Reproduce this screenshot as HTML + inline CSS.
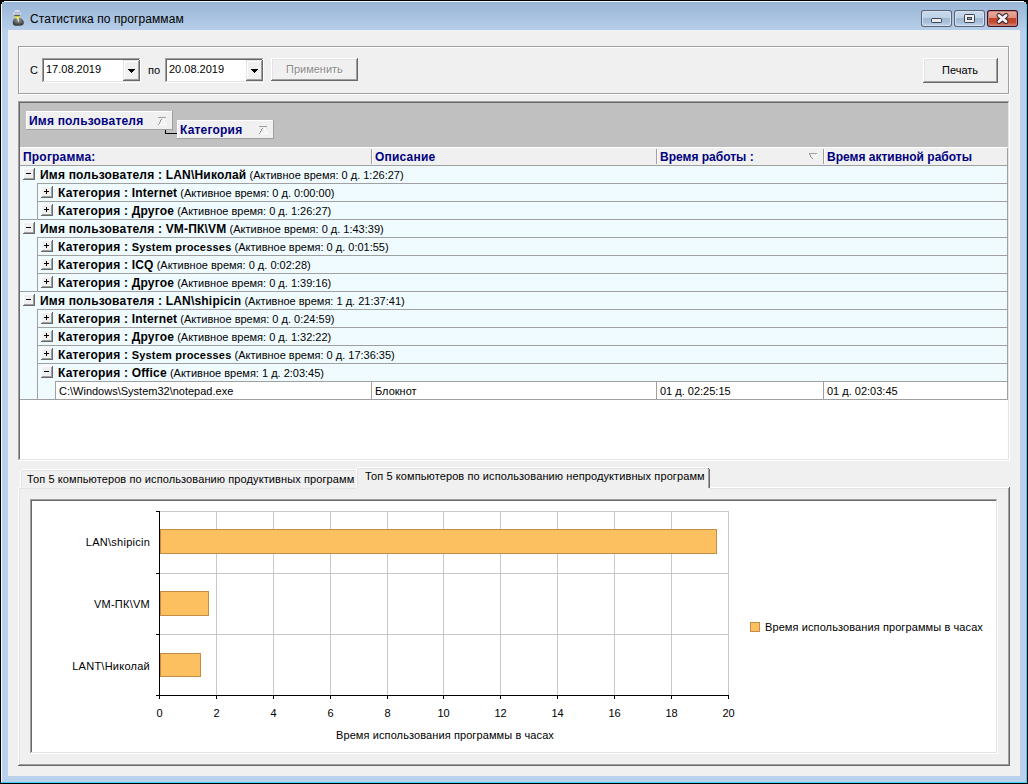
<!DOCTYPE html>
<html><head><meta charset="utf-8">
<style>
*{box-sizing:border-box;margin:0;padding:0}
html,body{width:1028px;height:784px;overflow:hidden;background:#000}
body{position:relative;font-family:"Liberation Sans",sans-serif;font-size:11px;color:#000}
.a{position:absolute}
.t{position:absolute;white-space:nowrap;line-height:13px}
.b{font-weight:bold;font-size:12px;letter-spacing:0.2px}
.nav{color:#000080}
</style></head><body>
<div class="a" style="left:0px;top:0px;width:1028px;height:784px;background:#000"></div>
<div class="a" style="left:1px;top:1px;width:1026px;height:782px;background:#3ad4f0;border-radius:3px 3px 0 0"></div>
<div class="a" style="left:1px;top:1px;width:1025px;height:781px;background:#f4f8fc;border-radius:3px 3px 0 0"></div>
<div class="a" style="left:2px;top:2px;width:1024px;height:780px;background:#b9d1ea;border-radius:2px 2px 0 0"></div>
<div class="a" style="left:2px;top:2px;width:1024px;height:28px;background:linear-gradient(#99b5d6,#b6cee9);border-radius:2px 2px 0 0"></div>
<div class="a" style="left:1026px;top:1px;width:1px;height:3px;background:#000"></div>
<div class="a" style="left:1px;top:1px;width:3px;height:1px;background:#000"></div>
<div class="a" style="left:1px;top:1px;width:1px;height:3px;background:#000"></div>
<div class="a" style="left:1024px;top:1px;width:3px;height:1px;background:#000"></div>
<div class="a" style="left:8px;top:30px;width:1012px;height:746px;background:#f0f0f0"></div>
<div class="t" style="left:30px;top:12px;font-size:12px;line-height:15px;letter-spacing:0.08px">Статистика по программам</div>
<svg class="a" style="left:11px;top:9px" width="14" height="18" viewBox="11 9 14 18">
<defs><radialGradient id="bd" cx="0.5" cy="0.3" r="0.75"><stop offset="0" stop-color="#9a9a9a"/><stop offset="0.6" stop-color="#555"/><stop offset="1" stop-color="#2a2a2a"/></radialGradient></defs>
<path d="M13 24 C12 21 13.5 18 17.5 17.8 C21.5 17.8 24 20 23.8 23 C23.5 25.5 21 25.8 18 25.8 C15 25.8 13.5 25.5 13 24 Z" fill="url(#bd)"/>
<path d="M17 18 L18.8 18 L18.6 23 Z" fill="#f4f4f4"/>
<ellipse cx="17.2" cy="16.8" rx="2.5" ry="2" fill="#f4e640"/>
<rect x="14.3" y="14.6" width="5.6" height="1.6" rx="0.6" fill="#56604c"/>
<rect x="14.6" y="10" width="5.2" height="3" rx="1.3" fill="#dadce6"/>
<ellipse cx="17" cy="13.4" rx="4.1" ry="1" fill="#eceef4"/>
<rect x="14.4" y="12.4" width="5.6" height="1" fill="#8c90d0"/>
</svg>
<div class="a" style="left:921px;top:10px;width:31px;height:17px;background:#56647a;border-radius:3px"></div>
<div class="a" style="left:922px;top:11px;width:29px;height:15px;background:rgba(240,246,252,0.85);border-radius:2px"></div>
<div class="a" style="left:923px;top:12px;width:27px;height:13px;background:linear-gradient(#c6d8ec 0%,#bed2e8 45%,#9fb8d4 50%,#a8c0dc 80%,#bcd2ea 100%)"></div>
<div class="a" style="left:954px;top:10px;width:31px;height:17px;background:#56647a;border-radius:3px"></div>
<div class="a" style="left:955px;top:11px;width:29px;height:15px;background:rgba(240,246,252,0.85);border-radius:2px"></div>
<div class="a" style="left:956px;top:12px;width:27px;height:13px;background:linear-gradient(#c6d8ec 0%,#bed2e8 45%,#9fb8d4 50%,#a8c0dc 80%,#bcd2ea 100%)"></div>
<div class="a" style="left:987px;top:10px;width:31px;height:17px;background:#4a0a14;border-radius:3px"></div>
<div class="a" style="left:988px;top:11px;width:29px;height:15px;background:rgba(255,220,210,0.6);border-radius:2px"></div>
<div class="a" style="left:989px;top:12px;width:27px;height:13px;background:linear-gradient(#eaaa9c 0%,#dc9080 45%,#c0442a 50%,#c44a30 80%,#d87a64 100%)"></div>
<div class="a" style="left:931px;top:18px;width:11px;height:5px;background:#3c4250;border-radius:2px"></div>
<div class="a" style="left:932px;top:19px;width:9px;height:3px;background:#ebebeb"></div>
<div class="a" style="left:964px;top:14px;width:11px;height:9px;background:#3c4250;border-radius:2px"></div>
<div class="a" style="left:965px;top:15px;width:9px;height:7px;background:#f0f0f0"></div>
<div class="a" style="left:967px;top:17px;width:5px;height:3px;background:#3c4250"></div>
<div class="a" style="left:968px;top:18px;width:3px;height:1px;background:#98acc4"></div>
<svg class="a" style="left:994px;top:11px" width="17" height="15" viewBox="0 0 17 15">
<path d="M5 4.5 L12 10.5 M12 4.5 L5 10.5" stroke="#44303a" stroke-width="5" stroke-linecap="round"/>
<path d="M5 4.5 L12 10.5 M12 4.5 L5 10.5" stroke="#f6f6f6" stroke-width="2.8" stroke-linecap="round"/>
</svg>
<div class="a" style="left:19px;top:47px;width:991px;height:48px;border:1px solid #fff"></div>
<div class="a" style="left:18px;top:46px;width:991px;height:48px;border:1px solid #a0a0a0"></div>
<div class="t" style="left:30px;top:64px;">С</div>
<div class="a" style="left:42px;top:58px;width:99px;height:25px;background:#fff"></div>
<div class="a" style="left:42px;top:58px;width:98px;height:24px;background:#a0a0a0"></div>
<div class="a" style="left:43px;top:59px;width:97px;height:23px;background:#e3e3e3"></div>
<div class="a" style="left:43px;top:59px;width:96px;height:22px;background:#696969"></div>
<div class="a" style="left:44px;top:60px;width:95px;height:21px;background:#fff"></div>
<div class="t" style="left:46px;top:63px;">17.08.2019</div>
<div class="a" style="left:123px;top:60px;width:17px;height:21px;background:#696969"></div>
<div class="a" style="left:123px;top:60px;width:16px;height:20px;background:#e3e3e3"></div>
<div class="a" style="left:124px;top:61px;width:15px;height:19px;background:#a0a0a0"></div>
<div class="a" style="left:124px;top:61px;width:14px;height:18px;background:#fff"></div>
<div class="a" style="left:125px;top:62px;width:13px;height:17px;background:#f0f0f0"></div>
<div class="a" style="left:128px;top:69px;width:7px;height:1px;background:#000"></div>
<div class="a" style="left:129px;top:70px;width:5px;height:1px;background:#000"></div>
<div class="a" style="left:130px;top:71px;width:3px;height:1px;background:#000"></div>
<div class="a" style="left:131px;top:72px;width:1px;height:1px;background:#000"></div>
<div class="t" style="left:148px;top:64px;">по</div>
<div class="a" style="left:165px;top:58px;width:99px;height:25px;background:#fff"></div>
<div class="a" style="left:165px;top:58px;width:98px;height:24px;background:#a0a0a0"></div>
<div class="a" style="left:166px;top:59px;width:97px;height:23px;background:#e3e3e3"></div>
<div class="a" style="left:166px;top:59px;width:96px;height:22px;background:#696969"></div>
<div class="a" style="left:167px;top:60px;width:95px;height:21px;background:#fff"></div>
<div class="t" style="left:169px;top:63px;">20.08.2019</div>
<div class="a" style="left:246px;top:60px;width:17px;height:21px;background:#696969"></div>
<div class="a" style="left:246px;top:60px;width:16px;height:20px;background:#e3e3e3"></div>
<div class="a" style="left:247px;top:61px;width:15px;height:19px;background:#a0a0a0"></div>
<div class="a" style="left:247px;top:61px;width:14px;height:18px;background:#fff"></div>
<div class="a" style="left:248px;top:62px;width:13px;height:17px;background:#f0f0f0"></div>
<div class="a" style="left:251px;top:69px;width:7px;height:1px;background:#000"></div>
<div class="a" style="left:252px;top:70px;width:5px;height:1px;background:#000"></div>
<div class="a" style="left:253px;top:71px;width:3px;height:1px;background:#000"></div>
<div class="a" style="left:254px;top:72px;width:1px;height:1px;background:#000"></div>
<div class="a" style="left:271px;top:58px;width:87px;height:23px;background:#696969"></div>
<div class="a" style="left:271px;top:58px;width:86px;height:22px;background:#fff"></div>
<div class="a" style="left:272px;top:59px;width:85px;height:21px;background:#a0a0a0"></div>
<div class="a" style="left:272px;top:59px;width:84px;height:20px;background:#e3e3e3"></div>
<div class="a" style="left:273px;top:60px;width:83px;height:19px;background:#f0f0f0"></div>
<div class="t" style="left:286px;top:63px;color:#8a8a8a;text-shadow:1px 1px 0 #fff">Применить</div>
<div class="a" style="left:923px;top:58px;width:75px;height:25px;background:#696969"></div>
<div class="a" style="left:923px;top:58px;width:74px;height:24px;background:#fff"></div>
<div class="a" style="left:924px;top:59px;width:73px;height:23px;background:#a0a0a0"></div>
<div class="a" style="left:924px;top:59px;width:72px;height:22px;background:#e3e3e3"></div>
<div class="a" style="left:925px;top:60px;width:71px;height:21px;background:#f0f0f0"></div>
<div class="t" style="left:942px;top:64px;">Печать</div>
<div class="a" style="left:18px;top:101px;width:992px;height:360px;background:#fff"></div>
<div class="a" style="left:18px;top:101px;width:991px;height:359px;background:#a0a0a0"></div>
<div class="a" style="left:19px;top:102px;width:990px;height:358px;background:#e3e3e3"></div>
<div class="a" style="left:19px;top:102px;width:989px;height:357px;background:#696969"></div>
<div class="a" style="left:20px;top:103px;width:988px;height:356px;background:#fff"></div>
<div class="a" style="left:20px;top:103px;width:988px;height:44px;background:#c0c0c0"></div>
<div class="a" style="left:26px;top:111px;width:147px;height:19px;background:#a0a0a0"></div>
<div class="a" style="left:26px;top:111px;width:146px;height:18px;background:#fff"></div>
<div class="a" style="left:27px;top:112px;width:145px;height:17px;background:#f0f0f0"></div>
<div class="t b nav" style="left:29px;top:115px;">Имя пользователя</div>
<div class="a" style="left:158px;top:117px;width:8px;height:1px;background:#a0a0a0"></div>
<div class="a" style="left:161px;top:119px;width:1px;height:1px;background:#909090"></div>
<div class="a" style="left:160px;top:120px;width:1px;height:1px;background:#909090"></div>
<div class="a" style="left:160px;top:121px;width:1px;height:1px;background:#909090"></div>
<div class="a" style="left:159px;top:122px;width:1px;height:1px;background:#909090"></div>
<div class="a" style="left:158px;top:124px;width:1px;height:1px;background:#909090"></div>
<div class="a" style="left:159px;top:123px;width:1px;height:1px;background:#b0b0b0"></div>
<div class="a" style="left:163px;top:119px;width:1px;height:1px;background:#fff"></div>
<div class="a" style="left:163px;top:120px;width:1px;height:1px;background:#fff"></div>
<div class="a" style="left:164px;top:121px;width:1px;height:1px;background:#fff"></div>
<div class="a" style="left:164px;top:122px;width:1px;height:1px;background:#fff"></div>
<div class="a" style="left:165px;top:123px;width:1px;height:1px;background:#fff"></div>
<div class="a" style="left:159px;top:124px;width:8px;height:1px;background:#fff"></div>
<div class="a" style="left:165px;top:130px;width:1px;height:4px;background:#000"></div>
<div class="a" style="left:165px;top:133px;width:12px;height:1px;background:#000"></div>
<div class="a" style="left:177px;top:120px;width:97px;height:19px;background:#a0a0a0"></div>
<div class="a" style="left:177px;top:120px;width:96px;height:18px;background:#fff"></div>
<div class="a" style="left:178px;top:121px;width:95px;height:17px;background:#f0f0f0"></div>
<div class="t b nav" style="left:180px;top:124px;">Категория</div>
<div class="a" style="left:259px;top:126px;width:8px;height:1px;background:#a0a0a0"></div>
<div class="a" style="left:262px;top:128px;width:1px;height:1px;background:#909090"></div>
<div class="a" style="left:261px;top:129px;width:1px;height:1px;background:#909090"></div>
<div class="a" style="left:261px;top:130px;width:1px;height:1px;background:#909090"></div>
<div class="a" style="left:260px;top:131px;width:1px;height:1px;background:#909090"></div>
<div class="a" style="left:259px;top:133px;width:1px;height:1px;background:#909090"></div>
<div class="a" style="left:260px;top:132px;width:1px;height:1px;background:#b0b0b0"></div>
<div class="a" style="left:264px;top:128px;width:1px;height:1px;background:#fff"></div>
<div class="a" style="left:264px;top:129px;width:1px;height:1px;background:#fff"></div>
<div class="a" style="left:265px;top:130px;width:1px;height:1px;background:#fff"></div>
<div class="a" style="left:265px;top:131px;width:1px;height:1px;background:#fff"></div>
<div class="a" style="left:266px;top:132px;width:1px;height:1px;background:#fff"></div>
<div class="a" style="left:260px;top:133px;width:8px;height:1px;background:#fff"></div>
<div class="a" style="left:20px;top:147px;width:988px;height:19px;background:#f0f0f0;border-top:1px solid #fff;border-bottom:1px solid #a0a0a0"></div>
<div class="a" style="left:371px;top:149px;width:1px;height:15px;background:#a0a0a0"></div>
<div class="a" style="left:372px;top:149px;width:1px;height:15px;background:#fff"></div>
<div class="a" style="left:656px;top:149px;width:1px;height:15px;background:#a0a0a0"></div>
<div class="a" style="left:657px;top:149px;width:1px;height:15px;background:#fff"></div>
<div class="a" style="left:823px;top:149px;width:1px;height:15px;background:#a0a0a0"></div>
<div class="a" style="left:824px;top:149px;width:1px;height:15px;background:#fff"></div>
<div class="t b nav" style="left:23px;top:151px;">Программа:</div>
<div class="t b nav" style="left:375px;top:151px;">Описание</div>
<div class="t b nav" style="left:660px;top:151px;letter-spacing:0">Время работы :</div>
<div class="a" style="left:809px;top:153px;width:8px;height:1px;background:#a0a0a0"></div>
<div class="a" style="left:809px;top:154px;width:1px;height:1px;background:#909090"></div>
<div class="a" style="left:810px;top:155px;width:1px;height:1px;background:#909090"></div>
<div class="a" style="left:810px;top:156px;width:1px;height:1px;background:#909090"></div>
<div class="a" style="left:811px;top:157px;width:1px;height:1px;background:#909090"></div>
<div class="a" style="left:812px;top:158px;width:1px;height:1px;background:#909090"></div>
<div class="a" style="left:816px;top:154px;width:1px;height:1px;background:#fff"></div>
<div class="a" style="left:815px;top:155px;width:1px;height:1px;background:#fff"></div>
<div class="a" style="left:815px;top:156px;width:1px;height:1px;background:#fff"></div>
<div class="a" style="left:814px;top:157px;width:1px;height:1px;background:#fff"></div>
<div class="a" style="left:813px;top:158px;width:1px;height:1px;background:#fff"></div>
<div class="t b nav" style="left:827px;top:151px;letter-spacing:0">Время активной работы</div>
<div class="a" style="left:1007px;top:148px;width:1px;height:18px;background:#a0a0a0"></div>
<div class="a" style="left:20px;top:166px;width:988px;height:216px;background:#f0fbff"></div>
<div class="a" style="left:20px;top:382px;width:35px;height:18px;background:#f0fbff"></div>
<div class="a" style="left:23px;top:168px;width:12px;height:12px;background:#696969"></div>
<div class="a" style="left:23px;top:168px;width:11px;height:11px;background:#fff"></div>
<div class="a" style="left:24px;top:169px;width:10px;height:10px;background:#a0a0a0"></div>
<div class="a" style="left:24px;top:169px;width:9px;height:9px;background:#f0f0f0"></div>
<div class="a" style="left:26px;top:173px;width:5px;height:1px;background:#000"></div>
<div class="t" style="left:40px;top:169px"><span class="b">Имя пользователя : LAN\Николай</span> (Активное время: 0 д. 1:26:27)</div>
<div class="a" style="left:37px;top:183px;width:971px;height:1px;background:#a0a0a0"></div>
<div class="a" style="left:37px;top:183px;width:1px;height:19px;background:#a0a0a0"></div>
<div class="a" style="left:41px;top:186px;width:12px;height:12px;background:#696969"></div>
<div class="a" style="left:41px;top:186px;width:11px;height:11px;background:#fff"></div>
<div class="a" style="left:42px;top:187px;width:10px;height:10px;background:#a0a0a0"></div>
<div class="a" style="left:42px;top:187px;width:9px;height:9px;background:#f0f0f0"></div>
<div class="a" style="left:44px;top:191px;width:5px;height:1px;background:#000"></div>
<div class="a" style="left:46px;top:189px;width:1px;height:5px;background:#000"></div>
<div class="t" style="left:58px;top:187px"><span class="b">Категория : Internet</span> (Активное время: 0 д. 0:00:00)</div>
<div class="a" style="left:37px;top:201px;width:971px;height:1px;background:#a0a0a0"></div>
<div class="a" style="left:37px;top:201px;width:1px;height:19px;background:#a0a0a0"></div>
<div class="a" style="left:41px;top:204px;width:12px;height:12px;background:#696969"></div>
<div class="a" style="left:41px;top:204px;width:11px;height:11px;background:#fff"></div>
<div class="a" style="left:42px;top:205px;width:10px;height:10px;background:#a0a0a0"></div>
<div class="a" style="left:42px;top:205px;width:9px;height:9px;background:#f0f0f0"></div>
<div class="a" style="left:44px;top:209px;width:5px;height:1px;background:#000"></div>
<div class="a" style="left:46px;top:207px;width:1px;height:5px;background:#000"></div>
<div class="t" style="left:58px;top:205px"><span class="b">Категория : Другое</span> (Активное время: 0 д. 1:26:27)</div>
<div class="a" style="left:20px;top:219px;width:988px;height:1px;background:#a0a0a0"></div>
<div class="a" style="left:23px;top:222px;width:12px;height:12px;background:#696969"></div>
<div class="a" style="left:23px;top:222px;width:11px;height:11px;background:#fff"></div>
<div class="a" style="left:24px;top:223px;width:10px;height:10px;background:#a0a0a0"></div>
<div class="a" style="left:24px;top:223px;width:9px;height:9px;background:#f0f0f0"></div>
<div class="a" style="left:26px;top:227px;width:5px;height:1px;background:#000"></div>
<div class="t" style="left:40px;top:223px"><span class="b">Имя пользователя : VM-ПК\VM</span> (Активное время: 0 д. 1:43:39)</div>
<div class="a" style="left:37px;top:237px;width:971px;height:1px;background:#a0a0a0"></div>
<div class="a" style="left:37px;top:237px;width:1px;height:19px;background:#a0a0a0"></div>
<div class="a" style="left:41px;top:240px;width:12px;height:12px;background:#696969"></div>
<div class="a" style="left:41px;top:240px;width:11px;height:11px;background:#fff"></div>
<div class="a" style="left:42px;top:241px;width:10px;height:10px;background:#a0a0a0"></div>
<div class="a" style="left:42px;top:241px;width:9px;height:9px;background:#f0f0f0"></div>
<div class="a" style="left:44px;top:245px;width:5px;height:1px;background:#000"></div>
<div class="a" style="left:46px;top:243px;width:1px;height:5px;background:#000"></div>
<div class="t" style="left:58px;top:241px"><span class="b">Категория : <span style="font-size:11px">System processes</span></span> (Активное время: 0 д. 0:01:55)</div>
<div class="a" style="left:37px;top:255px;width:971px;height:1px;background:#a0a0a0"></div>
<div class="a" style="left:37px;top:255px;width:1px;height:19px;background:#a0a0a0"></div>
<div class="a" style="left:41px;top:258px;width:12px;height:12px;background:#696969"></div>
<div class="a" style="left:41px;top:258px;width:11px;height:11px;background:#fff"></div>
<div class="a" style="left:42px;top:259px;width:10px;height:10px;background:#a0a0a0"></div>
<div class="a" style="left:42px;top:259px;width:9px;height:9px;background:#f0f0f0"></div>
<div class="a" style="left:44px;top:263px;width:5px;height:1px;background:#000"></div>
<div class="a" style="left:46px;top:261px;width:1px;height:5px;background:#000"></div>
<div class="t" style="left:58px;top:259px"><span class="b">Категория : ICQ</span> (Активное время: 0 д. 0:02:28)</div>
<div class="a" style="left:37px;top:273px;width:971px;height:1px;background:#a0a0a0"></div>
<div class="a" style="left:37px;top:273px;width:1px;height:19px;background:#a0a0a0"></div>
<div class="a" style="left:41px;top:276px;width:12px;height:12px;background:#696969"></div>
<div class="a" style="left:41px;top:276px;width:11px;height:11px;background:#fff"></div>
<div class="a" style="left:42px;top:277px;width:10px;height:10px;background:#a0a0a0"></div>
<div class="a" style="left:42px;top:277px;width:9px;height:9px;background:#f0f0f0"></div>
<div class="a" style="left:44px;top:281px;width:5px;height:1px;background:#000"></div>
<div class="a" style="left:46px;top:279px;width:1px;height:5px;background:#000"></div>
<div class="t" style="left:58px;top:277px"><span class="b">Категория : Другое</span> (Активное время: 0 д. 1:39:16)</div>
<div class="a" style="left:20px;top:291px;width:988px;height:1px;background:#a0a0a0"></div>
<div class="a" style="left:23px;top:294px;width:12px;height:12px;background:#696969"></div>
<div class="a" style="left:23px;top:294px;width:11px;height:11px;background:#fff"></div>
<div class="a" style="left:24px;top:295px;width:10px;height:10px;background:#a0a0a0"></div>
<div class="a" style="left:24px;top:295px;width:9px;height:9px;background:#f0f0f0"></div>
<div class="a" style="left:26px;top:299px;width:5px;height:1px;background:#000"></div>
<div class="t" style="left:40px;top:295px"><span class="b">Имя пользователя : LAN\shipicin</span> (Активное время: 1 д. 21:37:41)</div>
<div class="a" style="left:37px;top:309px;width:971px;height:1px;background:#a0a0a0"></div>
<div class="a" style="left:37px;top:309px;width:1px;height:19px;background:#a0a0a0"></div>
<div class="a" style="left:41px;top:312px;width:12px;height:12px;background:#696969"></div>
<div class="a" style="left:41px;top:312px;width:11px;height:11px;background:#fff"></div>
<div class="a" style="left:42px;top:313px;width:10px;height:10px;background:#a0a0a0"></div>
<div class="a" style="left:42px;top:313px;width:9px;height:9px;background:#f0f0f0"></div>
<div class="a" style="left:44px;top:317px;width:5px;height:1px;background:#000"></div>
<div class="a" style="left:46px;top:315px;width:1px;height:5px;background:#000"></div>
<div class="t" style="left:58px;top:313px"><span class="b">Категория : Internet</span> (Активное время: 0 д. 0:24:59)</div>
<div class="a" style="left:37px;top:327px;width:971px;height:1px;background:#a0a0a0"></div>
<div class="a" style="left:37px;top:327px;width:1px;height:19px;background:#a0a0a0"></div>
<div class="a" style="left:41px;top:330px;width:12px;height:12px;background:#696969"></div>
<div class="a" style="left:41px;top:330px;width:11px;height:11px;background:#fff"></div>
<div class="a" style="left:42px;top:331px;width:10px;height:10px;background:#a0a0a0"></div>
<div class="a" style="left:42px;top:331px;width:9px;height:9px;background:#f0f0f0"></div>
<div class="a" style="left:44px;top:335px;width:5px;height:1px;background:#000"></div>
<div class="a" style="left:46px;top:333px;width:1px;height:5px;background:#000"></div>
<div class="t" style="left:58px;top:331px"><span class="b">Категория : Другое</span> (Активное время: 0 д. 1:32:22)</div>
<div class="a" style="left:37px;top:345px;width:971px;height:1px;background:#a0a0a0"></div>
<div class="a" style="left:37px;top:345px;width:1px;height:19px;background:#a0a0a0"></div>
<div class="a" style="left:41px;top:348px;width:12px;height:12px;background:#696969"></div>
<div class="a" style="left:41px;top:348px;width:11px;height:11px;background:#fff"></div>
<div class="a" style="left:42px;top:349px;width:10px;height:10px;background:#a0a0a0"></div>
<div class="a" style="left:42px;top:349px;width:9px;height:9px;background:#f0f0f0"></div>
<div class="a" style="left:44px;top:353px;width:5px;height:1px;background:#000"></div>
<div class="a" style="left:46px;top:351px;width:1px;height:5px;background:#000"></div>
<div class="t" style="left:58px;top:349px"><span class="b">Категория : <span style="font-size:11px">System processes</span></span> (Активное время: 0 д. 17:36:35)</div>
<div class="a" style="left:37px;top:363px;width:971px;height:1px;background:#a0a0a0"></div>
<div class="a" style="left:37px;top:363px;width:1px;height:19px;background:#a0a0a0"></div>
<div class="a" style="left:41px;top:366px;width:12px;height:12px;background:#696969"></div>
<div class="a" style="left:41px;top:366px;width:11px;height:11px;background:#fff"></div>
<div class="a" style="left:42px;top:367px;width:10px;height:10px;background:#a0a0a0"></div>
<div class="a" style="left:42px;top:367px;width:9px;height:9px;background:#f0f0f0"></div>
<div class="a" style="left:44px;top:371px;width:5px;height:1px;background:#000"></div>
<div class="t" style="left:58px;top:367px"><span class="b">Категория : Office</span> (Активное время: 1 д. 2:03:45)</div>
<div class="a" style="left:55px;top:382px;width:953px;height:18px;background:#fff"></div>
<div class="a" style="left:55px;top:381px;width:1px;height:19px;background:#a0a0a0"></div>
<div class="a" style="left:55px;top:381px;width:953px;height:1px;background:#a0a0a0"></div>
<div class="a" style="left:20px;top:399px;width:988px;height:1px;background:#a0a0a0"></div>
<div class="a" style="left:37px;top:381px;width:1px;height:19px;background:#a0a0a0"></div>
<div class="a" style="left:371px;top:382px;width:1px;height:17px;background:#a0a0a0"></div>
<div class="a" style="left:656px;top:382px;width:1px;height:17px;background:#a0a0a0"></div>
<div class="a" style="left:823px;top:382px;width:1px;height:17px;background:#a0a0a0"></div>
<div class="a" style="left:1007px;top:166px;width:1px;height:234px;background:#a0a0a0"></div>
<div class="t" style="left:59px;top:385px;">C:\Windows\System32\notepad.exe</div>
<div class="t" style="left:375px;top:385px;">Блокнот</div>
<div class="t" style="left:660px;top:385px;">01 д. 02:25:15</div>
<div class="t" style="left:827px;top:385px;">01 д. 02:03:45</div>
<div class="a" style="left:18px;top:487px;width:992px;height:279px;background:#696969"></div>
<div class="a" style="left:18px;top:487px;width:991px;height:278px;background:#fff"></div>
<div class="a" style="left:19px;top:488px;width:990px;height:277px;background:#a0a0a0"></div>
<div class="a" style="left:19px;top:488px;width:989px;height:276px;background:#e3e3e3"></div>
<div class="a" style="left:20px;top:489px;width:988px;height:275px;background:#f0f0f0"></div>
<div class="a" style="left:20px;top:469px;width:336px;height:19px;background:#f0f0f0"></div>
<div class="a" style="left:22px;top:469px;width:334px;height:1px;background:#fff"></div>
<div class="a" style="left:21px;top:470px;width:1px;height:1px;background:#fff"></div>
<div class="a" style="left:20px;top:471px;width:1px;height:16px;background:#fff"></div>
<div class="a" style="left:22px;top:470px;width:334px;height:1px;background:#e3e3e3"></div>
<div class="a" style="left:21px;top:471px;width:1px;height:16px;background:#e3e3e3"></div>
<div class="t" style="left:27px;top:473px;letter-spacing:0.1px">Топ 5 компьютеров по использованию продуктивных программ</div>
<div class="a" style="left:356px;top:467px;width:354px;height:22px;background:#f0f0f0"></div>
<div class="a" style="left:358px;top:467px;width:350px;height:1px;background:#fff"></div>
<div class="a" style="left:357px;top:468px;width:1px;height:1px;background:#fff"></div>
<div class="a" style="left:356px;top:469px;width:1px;height:19px;background:#fff"></div>
<div class="a" style="left:358px;top:468px;width:350px;height:1px;background:#e3e3e3"></div>
<div class="a" style="left:357px;top:469px;width:1px;height:19px;background:#e3e3e3"></div>
<div class="a" style="left:708px;top:468px;width:1px;height:1px;background:#696969"></div>
<div class="a" style="left:708px;top:469px;width:1px;height:19px;background:#a0a0a0"></div>
<div class="a" style="left:709px;top:469px;width:1px;height:19px;background:#696969"></div>
<div class="t" style="left:365px;top:470px;letter-spacing:0.1px">Топ 5 компьютеров по использованию непродуктивных программ</div>
<div class="a" style="left:30px;top:499px;width:968px;height:255px;background:#fff"></div>
<div class="a" style="left:30px;top:499px;width:967px;height:254px;background:#a0a0a0"></div>
<div class="a" style="left:31px;top:500px;width:966px;height:253px;background:#e3e3e3"></div>
<div class="a" style="left:31px;top:500px;width:965px;height:252px;background:#696969"></div>
<div class="a" style="left:32px;top:501px;width:964px;height:251px;background:#fff"></div>
<svg class="a" style="left:0;top:0" width="1028" height="784" viewBox="0 0 1028 784" shape-rendering="crispEdges">
<line x1="216.5" y1="511" x2="216.5" y2="695" stroke="#c8c8c8"/>
<line x1="273.5" y1="511" x2="273.5" y2="695" stroke="#c8c8c8"/>
<line x1="330.5" y1="511" x2="330.5" y2="695" stroke="#c8c8c8"/>
<line x1="387.5" y1="511" x2="387.5" y2="695" stroke="#c8c8c8"/>
<line x1="443.5" y1="511" x2="443.5" y2="695" stroke="#c8c8c8"/>
<line x1="500.5" y1="511" x2="500.5" y2="695" stroke="#c8c8c8"/>
<line x1="557.5" y1="511" x2="557.5" y2="695" stroke="#c8c8c8"/>
<line x1="614.5" y1="511" x2="614.5" y2="695" stroke="#c8c8c8"/>
<line x1="671.5" y1="511" x2="671.5" y2="695" stroke="#c8c8c8"/>
<line x1="728.5" y1="511" x2="728.5" y2="695" stroke="#c8c8c8"/>
<line x1="159" y1="511.5" x2="729" y2="511.5" stroke="#c8c8c8"/>
<line x1="159" y1="573.5" x2="729" y2="573.5" stroke="#c8c8c8"/>
<line x1="159" y1="634.5" x2="729" y2="634.5" stroke="#c8c8c8"/>
<line x1="159.5" y1="511" x2="159.5" y2="696" stroke="#000"/>
<line x1="159" y1="695.5" x2="729" y2="695.5" stroke="#000"/>
<line x1="156" y1="511.5" x2="159" y2="511.5" stroke="#000"/>
<line x1="156" y1="573.5" x2="159" y2="573.5" stroke="#000"/>
<line x1="156" y1="634.5" x2="159" y2="634.5" stroke="#000"/>
<line x1="156" y1="695.5" x2="159" y2="695.5" stroke="#000"/>
<line x1="159.5" y1="695" x2="159.5" y2="699" stroke="#000"/>
<line x1="216.5" y1="695" x2="216.5" y2="699" stroke="#000"/>
<line x1="273.5" y1="695" x2="273.5" y2="699" stroke="#000"/>
<line x1="330.5" y1="695" x2="330.5" y2="699" stroke="#000"/>
<line x1="387.5" y1="695" x2="387.5" y2="699" stroke="#000"/>
<line x1="443.5" y1="695" x2="443.5" y2="699" stroke="#000"/>
<line x1="500.5" y1="695" x2="500.5" y2="699" stroke="#000"/>
<line x1="557.5" y1="695" x2="557.5" y2="699" stroke="#000"/>
<line x1="614.5" y1="695" x2="614.5" y2="699" stroke="#000"/>
<line x1="671.5" y1="695" x2="671.5" y2="699" stroke="#000"/>
<line x1="728.5" y1="695" x2="728.5" y2="699" stroke="#000"/>
<rect x="160.5" y="529.5" width="556" height="24" fill="#fcc060" stroke="#c48c44"/>
<rect x="160.5" y="591.5" width="48" height="24" fill="#fcc060" stroke="#c48c44"/>
<rect x="160.5" y="653.5" width="40" height="23" fill="#fcc060" stroke="#c48c44"/>
<rect x="750.5" y="622.5" width="9" height="9" fill="#fcc060" stroke="#c48c44"/>
</svg>
<div class="t" style="left:139px;top:707px;width:41px;text-align:center">0</div>
<div class="t" style="left:196px;top:707px;width:41px;text-align:center">2</div>
<div class="t" style="left:253px;top:707px;width:41px;text-align:center">4</div>
<div class="t" style="left:310px;top:707px;width:41px;text-align:center">6</div>
<div class="t" style="left:367px;top:707px;width:41px;text-align:center">8</div>
<div class="t" style="left:423px;top:707px;width:41px;text-align:center">10</div>
<div class="t" style="left:480px;top:707px;width:41px;text-align:center">12</div>
<div class="t" style="left:537px;top:707px;width:41px;text-align:center">14</div>
<div class="t" style="left:594px;top:707px;width:41px;text-align:center">16</div>
<div class="t" style="left:651px;top:707px;width:41px;text-align:center">18</div>
<div class="t" style="left:708px;top:707px;width:41px;text-align:center">20</div>
<div class="t" style="left:40px;top:536px;width:110px;text-align:right;letter-spacing:0.25px">LAN\shipicin</div>
<div class="t" style="left:40px;top:598px;width:110px;text-align:right;letter-spacing:0.25px">VM-ПК\VM</div>
<div class="t" style="left:40px;top:660px;width:110px;text-align:right;letter-spacing:0.25px">LANT\Николай</div>
<div class="t" style="left:336px;top:729px;letter-spacing:0.1px">Время использования программы в часах</div>
<div class="t" style="left:765px;top:621px;letter-spacing:0.1px">Время использования программы в часах</div>
</body></html>
